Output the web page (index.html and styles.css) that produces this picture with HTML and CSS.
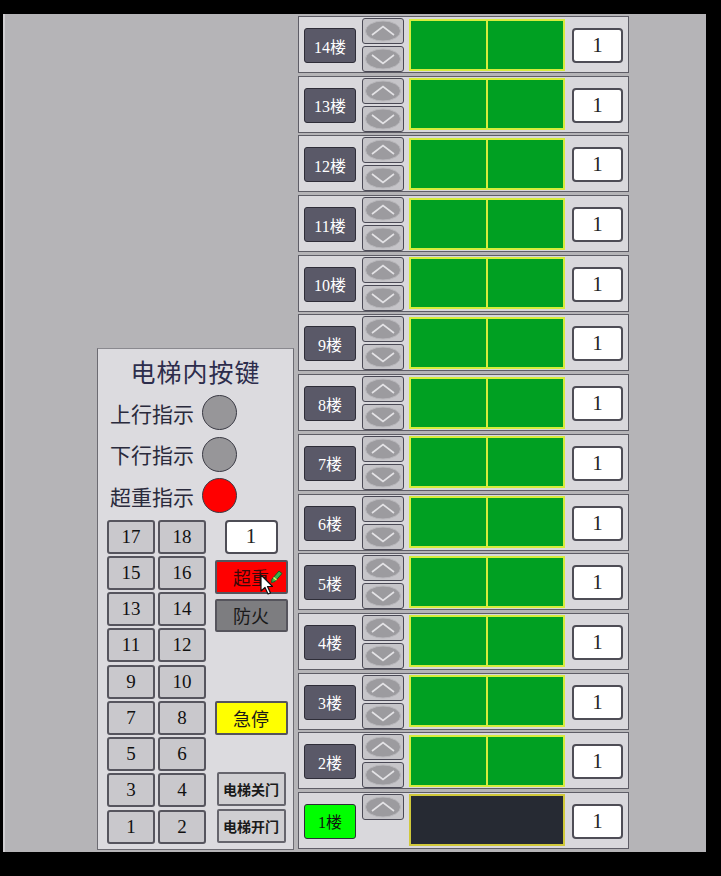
FILE: index.html
```html
<!DOCTYPE html>
<html lang="zh-CN">
<head>
    <meta charset="UTF-8">
    <meta name="viewport" content="width=device-width, initial-scale=1.0">
    <title>电梯控制</title>
    <link rel="stylesheet" href="styles.css">
</head>
<body>

    <div class="screen">

        <!-- 轿厢内操作面板 -->
        <div class="car-panel">
            <h2 class="car-title">电梯内按键</h2>

            <div class="lamp-row"><span>上行指示</span><i class="lamp"></i></div>
            <div class="lamp-row"><span>下行指示</span><i class="lamp"></i></div>
            <div class="lamp-row"><span>超重指示</span><i class="lamp on"></i></div>

            <div class="car-keys">
                <div class="keypad">
                    <button class="key">17</button><button class="key">18</button>
                    <button class="key">15</button><button class="key">16</button>
                    <button class="key">13</button><button class="key">14</button>
                    <button class="key">11</button><button class="key">12</button>
                    <button class="key">9</button><button class="key">10</button>
                    <button class="key">7</button><button class="key">8</button>
                    <button class="key">5</button><button class="key">6</button>
                    <button class="key">3</button><button class="key">4</button>
                    <button class="key">1</button><button class="key">2</button>
                </div>

                <div class="side-keys">
                    <div class="num-box car-floor">1</div>
                    <button class="func overload">超重
                        <svg class="pointer" width="26" height="28" viewBox="0 0 26 28">
                            <path d="M4 8 L4 24 L8 20.5 L11 27 L13.5 26 L10.5 19.5 L15.5 19.5 Z" fill="#fff" stroke="#111" stroke-width="1.2" stroke-linejoin="round"/>
                            <path d="M15 12 L22 4 L25 6.5 L18 14.5 L14.5 15.5 Z" fill="#3bb54a" stroke="#175c22" stroke-width="1"/>
                            <path d="M16.5 10.5 L19.5 13" stroke="#e8f060" stroke-width="1.4"/>
                        </svg>
                    </button>
                    <button class="func fire">防火</button>
                    <button class="func estop">急停</button>
                    <button class="func door close-door">电梯关门</button>
                    <button class="func door">电梯开门</button>
                </div>
            </div>
        </div>

        <!-- 各楼层外呼 + 轿门状态 -->
        <div class="floors" id="floors"></div>
    </div>

    <script>
        const chevUp = '<svg width="38" height="22" viewBox="0 0 38 22"><ellipse cx="19" cy="11" rx="17.5" ry="10" fill="#9c9b9f" stroke="#b9b8bc" stroke-width="1"/><path d="M8 15 L19 6.5 L30 15" fill="none" stroke="#e4e3e6" stroke-width="1.6"/></svg>';
        const chevDown = '<svg width="38" height="22" viewBox="0 0 38 22"><ellipse cx="19" cy="11" rx="17.5" ry="10" fill="#9c9b9f" stroke="#b9b8bc" stroke-width="1"/><path d="M8 7 L19 15.5 L30 7" fill="none" stroke="#e4e3e6" stroke-width="1.6"/></svg>';

        let floorList = document.getElementById("floors");

        for (let f = 14; f >= 1; f--) {
            let bottom = f === 1;
            let row = document.createElement("div");
            row.className = "floor-row";
            row.innerHTML =
                `<button class="floor-btn${bottom ? " here" : ""}">${f}楼</button>` +
                `<div class="arrows">` +
                    `<button class="arrow">${chevUp}</button>` +
                    (bottom ? `` : `<button class="arrow">${chevDown}</button>`) +
                `</div>` +
                `<div class="doors${bottom ? " closed" : ""}"><div class="door-leaf"></div><div class="door-leaf"></div></div>` +
                `<div class="num-box">1</div>`;
            floorList.appendChild(row);
        }
    </script>
</body>
</html>
```

FILE: styles.css
```css
body {
    margin: 0;
    background-color: #000;
    height: 876px;
    overflow: hidden;
    font-family: "Liberation Serif", "Noto Sans CJK SC", serif;
}
button {
    font-family: inherit;
    padding: 0;
    cursor: pointer;
}
.screen {
    display: flex;
    align-items: flex-start;
    gap: 4px;
    box-sizing: border-box;
    width: 703px;
    height: 838px;
    margin: 14px 0 0 3px;
    padding-left: 92px;
    background: #b5b4b7;
    border-left: 2px solid #cfced1;
}

/* ---- car panel ---- */
.car-panel {
    box-sizing: border-box;
    width: 197px;
    height: 502px;
    margin-top: 334px;
    padding: 10px 0 0 12px;
    background: #dcdbdf;
    border: 1px solid #6c6b72;
    border-top-color: #8a898f;
}
.car-title {
    margin: 0 0 6px -12px;
    font-size: 25px;
    line-height: 30px;
    font-weight: normal;
    text-align: center;
    color: #2d2d4c;
    letter-spacing: 1px;
}
.lamp-row {
    display: flex;
    align-items: center;
    height: 35px;
    margin-bottom: 6.5px;
    font-size: 21px;
    color: #2a2a3c;
}
.lamp-row span {
    width: 92px;
}
.lamp {
    width: 33px;
    height: 33px;
    border-radius: 50%;
    background: #979699;
    border: 1px solid #3a3a44;
}
.lamp.on {
    background: #ff0000;
}
.car-keys {
    display: flex;
    margin-top: 3px;
    margin-left: -3px;
}
.keypad {
    display: grid;
    grid-template-columns: 48px 48px;
    grid-auto-rows: 34px;
    column-gap: 3px;
    row-gap: 2.25px;
}
.key {
    background: #c9c8cc;
    border: 2px solid #56555e;
    border-radius: 3px;
    font-size: 19px;
    color: #111;
}
.side-keys {
    display: flex;
    flex-direction: column;
    align-items: center;
    width: 74px;
    margin-left: 8px;
}
.num-box.car-floor {
    width: 53px;
    height: 34px;
    margin: 0;
}
.func {
    position: relative;
    box-sizing: border-box;
    width: 73px;
    height: 34px;
    border: 2px solid #55545c;
    border-radius: 2px;
    font-size: 18px;
    color: #1a1a1a;
}
.overload {
    margin-top: 6px;
    background: #ff0000;
    color: #3a0808;
}
.fire {
    margin-top: 5px;
    height: 33px;
    background: #7d7d80;
}
.estop {
    margin-top: 69px;
    background: #ffff00;
}
.door {
    width: 69px;
    margin-top: 3px;
    background: #d0cfd2;
    font-family: "Noto Sans CJK SC", sans-serif;
    font-size: 14px;
    font-weight: bold;
    border-color: #66656d;
}
.close-door {
    margin-top: 37px;
}
.pointer {
    position: absolute;
    left: 40px;
    top: 5px;
}

/* ---- floor column ---- */
.floors {
    display: flex;
    flex-direction: column;
    gap: 2.7px;
    width: 331px;
    margin-top: 2px;
}
.floor-row {
    display: flex;
    align-items: center;
    box-sizing: border-box;
    height: 57px;
    padding: 0 5px;
    background: #d9d8dc;
    border: 1px solid #5e5d66;
}
.floor-btn {
    width: 52px;
    height: 35px;
    margin-top: 2px;
    background: #5a5968;
    border: 1px solid #2e2d38;
    border-radius: 3px;
    color: #fff;
    font-size: 16px;
}
.floor-btn.here {
    background: #00ff00;
    color: #111;
}
.arrows {
    display: flex;
    flex-direction: column;
    gap: 2px;
    align-self: flex-start;
    margin: 1px 0 0 6px;
}
.arrow {
    display: flex;
    align-items: center;
    justify-content: center;
    width: 42px;
    height: 26px;
    background: #c6c5c9;
    border: 1px solid #4a4955;
    border-radius: 3px;
}
.doors {
    display: flex;
    box-sizing: border-box;
    width: 156px;
    height: 52px;
    margin-left: 5px;
    border: 2px solid #d6ec3c;
    background: #00a022;
}
.door-leaf {
    flex: 1;
}
.door-leaf + .door-leaf {
    border-left: 2px solid #d6ec3c;
}
.doors.closed {
    background: #262a33;
    border-color: #d0c83a;
}
.doors.closed .door-leaf + .door-leaf {
    border-left: none;
}
.num-box {
    display: flex;
    align-items: center;
    justify-content: center;
    box-sizing: border-box;
    width: 51px;
    height: 35px;
    margin: 2px 0 0 auto;
    background: #fff;
    border: 2px solid #4e4d56;
    border-radius: 4px;
    font-size: 21px;
    color: #222;
}
```
